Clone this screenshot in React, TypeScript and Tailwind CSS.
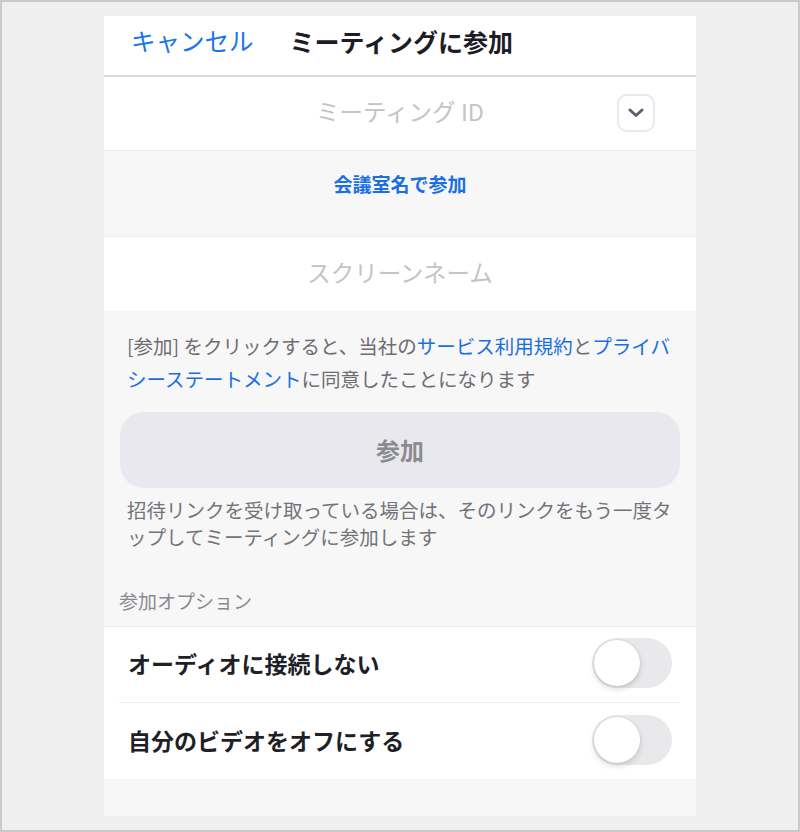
import React from "react";

const FONT = "font-['Noto_Sans_CJK_JP','Noto_Sans',sans-serif]";

function Toggle() {
  return (
    <div className="relative h-[50px] w-[80px] rounded-full bg-[#e9e9eb]">
      <div className="absolute left-[2px] top-[2px] h-[46px] w-[46px] rounded-full bg-white shadow-[0_3px_6px_rgba(0,0,0,0.15),0_0_0_1px_rgba(0,0,0,0.04)]" />
    </div>
  );
}

const OPTIONS = ["オーディオに接続しない", "自分のビデオをオフにする"];

export default function App() {
  return (
    <div className={`h-[832px] w-[800px] border-2 border-[#cacaca] bg-[#efefef] pl-[102px] pt-[14px] ${FONT}`}>
      <div className="flex h-[800px] w-[592px] flex-col overflow-hidden bg-[#f7f7f7]">
        {/* header */}
        <div className="flex h-[61px] items-center gap-[36px] border-b-2 border-[#d9d9d9] bg-white pb-[9px] pl-[27px] leading-[30px]">
          <span className="text-[24.5px] text-[#1a75ea]">キャンセル</span>
          <span className="text-[25px] font-bold text-[#1c1c26]">ミーティングに参加</span>
        </div>

        {/* meeting id */}
        <div className="relative flex h-[74px] items-center justify-center border-b border-[#ececf0] bg-white pb-[6px]">
          <span className="text-[23.5px] leading-[30px] text-[#c4c4c6]">ミーティング ID</span>
          <div className="absolute right-[41px] top-[17px] flex h-[38px] w-[38px] items-center justify-center rounded-[10px] border-2 border-[#e8e8f0]">
            <svg width="16" height="10" viewBox="0 0 16 10" fill="none">
              <path d="M2 2l6 5.5L14 2" stroke="#5f5f70" strokeWidth="3" strokeLinecap="round" strokeLinejoin="round" />
            </svg>
          </div>
        </div>

        {/* join by room name */}
        <div className="h-[85px] pt-[20px] text-center text-[19px] font-bold leading-[26px] text-[#1a6fe4]">
          会議室名で参加
        </div>

        {/* screen name */}
        <div className="flex h-[75px] items-center justify-center border-t border-[#ececec] bg-white pb-[4px]">
          <span className="text-[23.5px] leading-[30px] text-[#c4c4c6]">スクリーンネーム</span>
        </div>

        {/* terms */}
        <div className="whitespace-nowrap px-[23px] pt-[18px] text-[19.5px] leading-[33px] text-[#6d6d72]">
          <div>
            [参加] をクリックすると、当社の<span className="text-[#1a6fe0]">サービス利用規約</span>と
            <span className="text-[#1a6fe0]">プライバ</span>
          </div>
          <div>
            <span className="text-[#1a6fe0]">シーステートメント</span>に同意したことになります
          </div>
        </div>

        <div className="mx-[16px] mt-[17px] flex h-[76px] items-center justify-center rounded-[24px] bg-[#e8e8ee] text-[24px] font-bold text-[#8a8a90]">
          参加
        </div>

        <div className="mt-[8px] whitespace-nowrap px-[23px] text-[19.5px] leading-[27px] text-[#737378]">
          <div>招待リンクを受け取っている場合は、そのリンクをもう一度タ</div>
          <div>ップしてミーティングに参加します</div>
        </div>

        <div className="mt-[38px] px-[15px] text-[19px] leading-[26px] text-[#8a8a8e]">参加オプション</div>

        {/* options */}
        <div className="mt-[12px] border-t border-[#ececec] bg-white pl-[15px] pr-[16px]">
          {OPTIONS.map((label, i) => (
            <div
              key={label}
              className={`flex h-[76px] items-center justify-between pb-[3px] pl-[9px] pr-[8px] ${i === 0 ? "border-b border-[#ededed]" : ""}`}
            >
              <span className="text-[23px] font-bold leading-[30px] text-[#1f1f28]">{label}</span>
              <Toggle />
            </div>
          ))}
        </div>
      </div>
    </div>
  );
}
